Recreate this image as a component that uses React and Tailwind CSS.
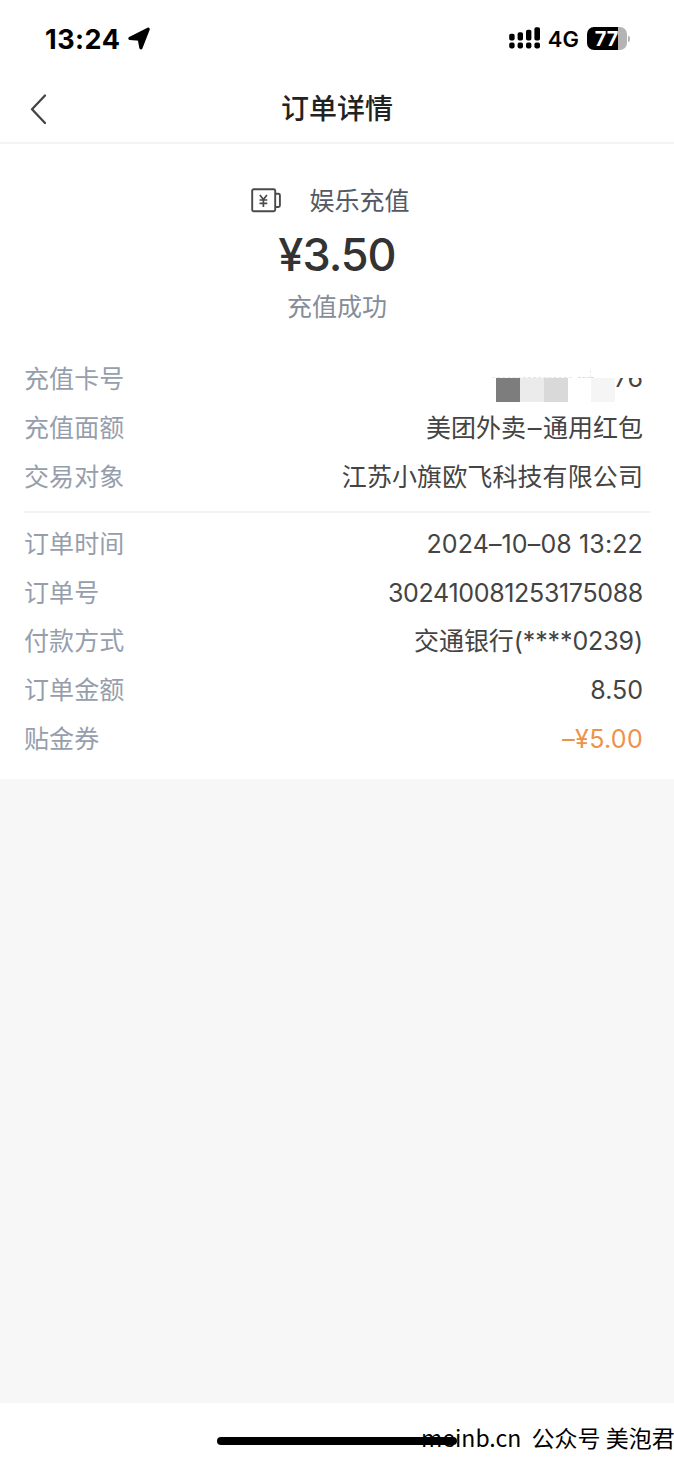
// ─── Order data ───────────────────────────────────────────────────────────────
const orderRows = [
    { label: '订单时间', value: '2024–10–08 13:22', className: 'tracking-[0.13px]' },
    { label: '订单号', value: '302410081253175088', className: 'tracking-[-0.33px]' },
    { label: '付款方式', value: '交通银行(****0239)', className: 'tracking-[-0.1px]' },
    { label: '订单金额', value: '8.50' },
    { label: '贴金券', value: '–¥5.00', className: 'tracking-[0.3px] text-[#ee924a]' },
]

// ─── Status bar ───────────────────────────────────────────────────────────────
function SignalIcon() {
    return (
        <svg width="33" height="24" viewBox="0 0 33 24" fill="#000">
            <rect x="0.2" y="6.8" width="5.4" height="6.8" rx="1.8" />
            <rect x="8.6" y="5.3" width="5.4" height="8.3" rx="1.8" />
            <rect x="17" y="2.8" width="5.4" height="10.8" rx="1.8" />
            <rect x="25.4" y="0.3" width="5.6" height="13.3" rx="1.8" />
            <rect x="0.2" y="15.6" width="5.4" height="5.8" rx="1.8" />
            <rect x="8.6" y="15.6" width="5.4" height="5.8" rx="1.8" />
            <rect x="17" y="15.6" width="5.4" height="5.8" rx="1.8" />
            <rect x="25.4" y="15.6" width="5.6" height="5.8" rx="1.8" />
        </svg>
    )
}

function Battery() {
    return (
        <div className="flex items-center gap-px">
            <div className="flex h-[23px] w-10 items-center justify-center rounded-[7px] bg-linear-to-r from-black from-77% to-[#b4b4b4] to-77% pr-px text-[20px] font-bold leading-none text-white">
                77
            </div>
            <div className="h-[6px] w-[2px] rounded-r-full bg-[#b4b4b4]" />
        </div>
    )
}

function StatusBar() {
    return (
        <div className="flex h-[76px] items-center justify-between pl-[45px] pr-11 pt-px text-black">
            <div className="flex items-center gap-2">
                <span className="pt-px text-[27px] font-bold leading-none tracking-[0.5px]">13:24</span>
                <svg width="23" height="23" viewBox="0 0 23 23">
                    <path d="M20.2 2.2 12.9 20.8 11.3 12.2 1.9 11.4Z" fill="#000" stroke="#000" strokeWidth="3.2" strokeLinejoin="round" />
                </svg>
            </div>
            <div className="flex items-center">
                <SignalIcon />
                <span className="ml-1.5 mr-2 text-[22px] font-semibold leading-none">4G</span>
                <Battery />
            </div>
        </div>
    )
}

// ─── Nav bar ──────────────────────────────────────────────────────────────────
function NavBar() {
    return (
        <div className="grid h-[68px] grid-cols-[1fr_auto_1fr] items-center border-b-2 border-[#f3f3f3] px-7">
            <svg width="20" height="32" viewBox="0 0 20 32" fill="none" stroke="#444" strokeWidth="2.3" strokeLinecap="round" strokeLinejoin="round">
                <path d="M17 2.5 4 16.2 17 30" />
            </svg>
            <h1 className="text-[28px] font-medium leading-none text-[#222]">订单详情</h1>
        </div>
    )
}

// ─── Amount summary ───────────────────────────────────────────────────────────
function RechargeIcon() {
    return (
        <svg width="32" height="26" viewBox="0 0 32 26" fill="none" stroke="#4a4a4a" strokeWidth="1.9" strokeLinejoin="round">
            <rect x="1.2" y="1.3" width="23" height="22" rx="1.5" />
            <path d="M24.2 5.8h3.2q1.5 0 1.5 1.5v10.2q0 1.5-1.5 1.5h-3.2" />
            <path d="m8.9 6.9 3.5 4.7 3.5-4.7M12.4 11.6v7.3M8.5 12h7.8M8.5 15.3h7.8" strokeWidth="1.7" />
        </svg>
    )
}

function Summary() {
    return (
        <div className="flex h-[211px] flex-col items-center pt-[45px]">
            <div className="flex h-6 items-center gap-[26px] pr-[13px]">
                <RechargeIcon />
                <span className="text-[25px] leading-none text-[#525a66]">娱乐充值</span>
            </div>
            <div className="mt-[19px] text-[45px] font-medium leading-[46px] tracking-[-1px] text-[#333]">¥3.50</div>
            <div className="mt-4 text-[25px] leading-[26px] text-[#858d99]">充值成功</div>
        </div>
    )
}

// ─── Detail rows ──────────────────────────────────────────────────────────────
function Row({ label, className = '', children }) {
    return (
        <div className="flex h-[48.8px] items-center justify-between text-[25px] leading-none">
            <span className="tracking-[0.1px] text-[#969eac]">{label}</span>
            <span className={`whitespace-nowrap text-[#444] ${className}`}>{children}</span>
        </div>
    )
}

// Card number hidden by grey blocks, only the last two digits peek out
function MaskedCard() {
    return (
        <span className="relative flex h-[25px] items-start">
            <span className="h-6 w-6 bg-[#7d7d7d]" />
            <span className="h-6 w-6 bg-[#ebebeb]" />
            <span className="h-6 w-6 bg-[#d9d9d9]" />
            <span className="h-6 w-[23px]" />
            <span className="h-6 w-6 bg-[#f5f5f5]" />
            <span className="-mt-2.5 -ml-px leading-[20px]">76</span>
            <span className="absolute -left-1 -top-4 h-4 w-[152px] bg-white" />
            <span className="absolute -left-1 -top-px h-px w-20 border-t border-dashed border-[#e6e6e6]" />
            <span className="absolute -top-px left-[82px] h-px w-4 border-t border-dashed border-[#dedede]" />
            <span className="absolute -top-2 left-[94px] h-2 w-px border-l border-dashed border-[#e9e9e9]" />
        </span>
    )
}

export default function App() {
    return (
        <div className="relative flex h-[1458px] w-[674px] flex-col overflow-hidden bg-white font-['Inter','Noto_Sans_CJK_SC',sans-serif]">
            <StatusBar />
            <NavBar />
            <Summary />

            <div className="h-[424px] pl-6 pr-[31px] pt-[0.5px]">
                <Row label="充值卡号" className="pt-[21px]">
                    <MaskedCard />
                </Row>
                <Row label="充值面额">
                    美团外卖<span className="inline-block w-[17px] scale-x-110 text-center">–</span>通用红包
                </Row>
                <Row label="交易对象" className="tracking-[0.1px]">江苏小旗欧飞科技有限公司</Row>
                <div className="-mr-2 mb-[7px] mt-[9px] h-0.5 bg-[#f3f3f4]" />
                {orderRows.map(row => (
                    <Row key={row.label} label={row.label} className={row.className}>{row.value}</Row>
                ))}
            </div>

            <div className="h-[624px] bg-[#f7f7f7]" />

            {/* Home indicator */}
            <div className="flex flex-1 items-center justify-center pt-5">
                <div className="h-2 w-60 rounded-full bg-black" />
            </div>

            <div className="absolute left-[421px] top-[1423px] whitespace-pre font-['Noto_Sans_CJK_SC',sans-serif] text-[23px] leading-[28px] text-black">
                meinb.cn  公众号 美泡君
            </div>
        </div>
    )
}
